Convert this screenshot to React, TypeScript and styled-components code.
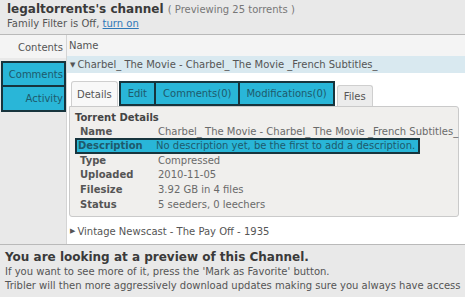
import React from "react";
import styled, { createGlobalStyle } from "styled-components";

const GlobalStyle = createGlobalStyle`
  html, body {
    margin: 0;
    padding: 0;
    background: #e9e9e9;
    font-family: "DejaVu Sans", "Liberation Sans", sans-serif;
    color: #3c3c3c;
  }
`;

const CYAN = "#29b6d8";
const DARK = "#17343d";
const HL_TEXT = "#1e5a6c";

const Page = styled.div`
  width: 465px;
  height: 297px;
  overflow: hidden;
  display: flex;
  flex-direction: column;
`;

const Header = styled.div`
  height: 35px;
  padding: 2px 0 0 7px;
  border-bottom: 1px solid #b9b9b9;
  box-sizing: border-box;
`;

const Title = styled.div`
  font-size: 12px;
  font-weight: bold;
  color: #3a3a3a;
  white-space: nowrap;
`;

const Sub = styled.span`
  font-weight: normal;
  font-size: 10px;
  color: #777;
`;

const Filter = styled.div`
  font-size: 10px;
  color: #555;
  margin-top: 2px;
`;

const Link = styled.a`
  color: #2f78b8;
  text-decoration: underline;
`;

const Body = styled.div`
  display: flex;
  height: 209px;
`;

const Sidebar = styled.div`
  width: 66px;
  flex-shrink: 0;
  display: flex;
  flex-direction: column;
`;

const ContentsTab = styled.div`
  height: 23px;
  font-size: 10px;
  color: #555;
  background: #f4f4f4;
  display: flex;
  align-items: center;
  justify-content: flex-end;
  padding: 2px 3px 0 0;
  box-sizing: border-box;
`;

const SideGroup = styled.div`
  margin: 3px 0 0 1px;
  border: 2px solid ${DARK};
  display: flex;
  flex-direction: column;
`;

const SideTab = styled.div<{ $last?: boolean }>`
  height: ${(p) => (p.$last ? "23px" : "24px")};
  box-sizing: border-box;
  font-size: 10px;
  display: flex;
  align-items: center;
  justify-content: flex-end;
  padding-right: 1px;
  background: ${CYAN};
  color: ${HL_TEXT};
  border-bottom: ${(p) => (p.$last ? "none" : `2px solid ${DARK}`)};
`;

const Main = styled.div`
  flex: 1;
  background: #fff;
  border-left: 1px solid #d4d4d4;
  display: flex;
  flex-direction: column;
`;

const ColHead = styled.div`
  height: 21px;
  background: #f4f4f4;
  font-size: 10px;
  color: #555;
  display: flex;
  align-items: center;
  padding-left: 2px;
`;

const ItemRow = styled.div<{ $open?: boolean }>`
  height: ${(p) => (p.$open ? "17px" : "20px")};
  background: ${(p) => (p.$open ? "#d9e9f0" : "#fff")};
  font-size: 10px;
  color: #555;
  display: flex;
  align-items: center;
  padding-left: 3px;
  white-space: nowrap;
  gap: 2px;
`;

const Arrow = styled.span`
  font-size: 7px;
  color: #555;
`;

const Expanded = styled.div`
  padding: 8px 6px 4px 2px;
`;

const Tabs = styled.div`
  display: flex;
  align-items: flex-end;
  height: 25px;
  padding-left: 2px;
`;

const Tab = styled.div<{ $kind: "active" | "plain" }>`
  box-sizing: border-box;
  height: ${(p) => (p.$kind === "plain" ? "21px" : "25px")};
  font-size: 10px;
  display: flex;
  align-items: center;
  padding: 0 ${(p) => (p.$kind === "plain" ? "6px" : "5px")};
  border-radius: 3px 3px 0 0;
  background: ${(p) => (p.$kind === "active" ? "#f8f8f8" : "#ececec")};
  border: 1px solid #cfcfcf;
  border-bottom: none;
  color: #555;
  margin-left: ${(p) => (p.$kind === "plain" ? "2px" : "0")};
`;

const HlTabs = styled.div`
  display: flex;
  height: 25px;
  margin-left: 1px;
  border: 2px solid ${DARK};
  box-sizing: border-box;
`;

const HlTab = styled.div<{ $pad: number }>`
  font-size: 10px;
  display: flex;
  align-items: center;
  padding: 0 ${(p) => p.$pad}px;
  background: ${CYAN};
  color: ${HL_TEXT};
  & + & {
    border-left: 2px solid ${DARK};
  }
`;

const Box = styled.div`
  background: #f0efed;
  border: 1px solid #cacaca;
  border-radius: 0 3px 3px 3px;
  height: 111px;
  box-sizing: border-box;
  padding: 3px 0 0 5px;
`;

const BoxTitle = styled.div`
  font-size: 10px;
  font-weight: bold;
  color: #444;
  height: 14px;
  display: flex;
  align-items: center;
`;

const DetailRow = styled.div<{ $hl?: boolean }>`
  display: flex;
  width: max-content;
  height: ${(p) => (p.$hl ? "16px" : "14.8px")};
  align-items: center;
  box-sizing: border-box;
  font-size: 10px;
  white-space: nowrap;
  padding-right: ${(p) => (p.$hl ? "3px" : "0")};
  color: ${(p) => (p.$hl ? HL_TEXT : "#6a6a6a")};
  background: ${(p) => (p.$hl ? CYAN : "transparent")};
  border: ${(p) => (p.$hl ? `2px solid ${DARK}` : "none")};
  margin-left: ${(p) => (p.$hl ? "0" : "2px")};
  margin-top: ${(p) => (p.$hl ? "-1px" : "0")};
  margin-bottom: ${(p) => (p.$hl ? "-1px" : "0")};
`;

const Label = styled.span<{ $hl?: boolean }>`
  width: 78px;
  padding-left: ${(p) => (p.$hl ? "1px" : "3px")};
  font-weight: bold;
  color: ${(p) => (p.$hl ? HL_TEXT : "#555")};
`;

const Footer = styled.div`
  flex: 1;
  border-top: 1px solid #b9b9b9;
  padding: 5px 0 0 5px;
  white-space: nowrap;
`;

const FootTitle = styled.div`
  font-size: 12px;
  font-weight: bold;
  color: #3a3a3a;
  margin-bottom: 1px;
`;

const FootLine = styled.div`
  font-size: 10px;
  color: #555;
  line-height: 14px;
`;

const details: [string, string][] = [
  ["Name", "Charbel_ The Movie - Charbel_ The Movie _French Subtitles_"],
  ["Description", "No description yet, be the first to add a description."],
  ["Type", "Compressed"],
  ["Uploaded", "2010-11-05"],
  ["Filesize", "3.92 GB in 4 files"],
  ["Status", "5 seeders, 0 leechers"],
];

export default function App() {
  return (
    <Page>
      <GlobalStyle />
      <Header>
        <Title>
          legaltorrents's channel <Sub>( Previewing 25 torrents )</Sub>
        </Title>
        <Filter>
          Family Filter is Off, <Link>turn on</Link>
        </Filter>
      </Header>
      <Body>
        <Sidebar>
          <ContentsTab>Contents</ContentsTab>
          <SideGroup>
            <SideTab>Comments</SideTab>
            <SideTab $last>Activity</SideTab>
          </SideGroup>
        </Sidebar>
        <Main>
          <ColHead>Name</ColHead>
          <ItemRow $open>
            <Arrow>▼</Arrow> Charbel_ The Movie - Charbel_ The Movie _French Subtitles_
          </ItemRow>
          <Expanded>
            <Tabs>
              <Tab $kind="active">Details</Tab>
              <HlTabs>
                <HlTab $pad={7}>Edit</HlTab>
                <HlTab $pad={7}>Comments(0)</HlTab>
                <HlTab $pad={6}>Modifications(0)</HlTab>
              </HlTabs>
              <Tab $kind="plain">Files</Tab>
            </Tabs>
            <Box>
              <BoxTitle>Torrent Details</BoxTitle>
              {details.map(([k, v]) => {
                const hl = k === "Description";
                return (
                  <DetailRow key={k} $hl={hl}>
                    <Label $hl={hl}>{k}</Label>
                    {v}
                  </DetailRow>
                );
              })}
            </Box>
          </Expanded>
          <ItemRow>
            <Arrow>▶</Arrow> Vintage Newscast - The Pay Off - 1935
          </ItemRow>
        </Main>
      </Body>
      <Footer>
        <FootTitle>You are looking at a preview of this Channel.</FootTitle>
        <FootLine>If you want to see more of it, press the 'Mark as Favorite' button.</FootLine>
        <FootLine>Tribler will then more aggressively download updates making sure you always have access</FootLine>
      </Footer>
    </Page>
  );
}
